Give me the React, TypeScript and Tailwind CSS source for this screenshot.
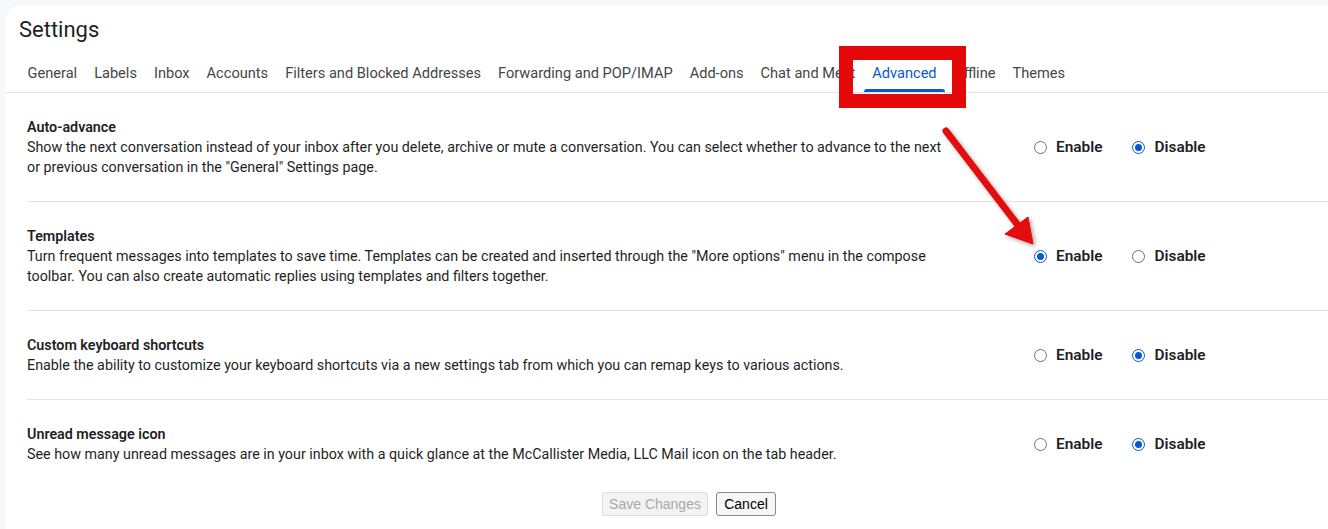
import React from 'react';

const tabs = [
  'General',
  'Labels',
  'Inbox',
  'Accounts',
  'Filters and Blocked Addresses',
  'Forwarding and POP/IMAP',
  'Add-ons',
  'Chat and Meet',
  'Advanced',
  'Offline',
  'Themes',
];

interface SettingRow {
  title: string;
  desc: string;
  enabled: boolean;
}

const rows: SettingRow[] = [
  {
    title: 'Auto-advance',
    desc: 'Show the next conversation instead of your inbox after you delete, archive or mute a conversation. You can select whether to advance to the next or previous conversation in the "General" Settings page.',
    enabled: false,
  },
  {
    title: 'Templates',
    desc: 'Turn frequent messages into templates to save time. Templates can be created and inserted through the "More options" menu in the compose toolbar. You can also create automatic replies using templates and filters together.',
    enabled: true,
  },
  {
    title: 'Custom keyboard shortcuts',
    desc: 'Enable the ability to customize your keyboard shortcuts via a new settings tab from which you can remap keys to various actions.',
    enabled: false,
  },
  {
    title: 'Unread message icon',
    desc: 'See how many unread messages are in your inbox with a quick glance at the McCallister Media, LLC Mail icon on the tab header.',
    enabled: false,
  },
];

const Radio: React.FC<{ checked: boolean; label: string }> = ({ checked, label }) => (
  <label className="flex items-center gap-[9px]">
    {checked ? (
      <span className="flex h-[13px] w-[13px] items-center justify-center rounded-full border-[1.5px] border-[#0b57d0] bg-white">
        <span className="h-[7px] w-[7px] rounded-full bg-[#0b57d0]" />
      </span>
    ) : (
      <span className="h-[13px] w-[13px] rounded-full border border-[#6f6f6f] bg-white" />
    )}
    <span className="text-[15.4px] font-semibold text-[#1f1f1f]">{label}</span>
  </label>
);

export default function App() {
  return (
    <div
      className="relative h-[529px] w-full overflow-hidden bg-[#f6f8fc] pl-[5px] pt-[5px]"
      style={{ fontFamily: 'Roboto, "Open Sans", sans-serif' }}
    >
      <div className="min-h-[560px] w-[1368px] rounded-tl-2xl bg-white">
        {/* Header */}
        <h1 className="pl-[14px] pt-[11px] text-[22px] leading-7 text-[#1f1f1f]">Settings</h1>

        {/* Tabs */}
        <div className="mt-[8px] flex border-b border-[#e3e3e3] pl-[14px]">
          {tabs.map((t) => (
            <div
              key={t}
              className={
                t === 'Advanced'
                  ? 'relative flex h-[40px] items-center px-[8.5px] pt-[4px] text-[14.6px] text-[#0b57d0]'
                  : 'flex h-[40px] items-center px-[8.5px] pt-[4px] text-[14.6px] text-[#444746]'
              }
            >
              {t}
              {t === 'Advanced' && (
                <span className="absolute bottom-0 left-0 right-0 h-[3px] rounded-t bg-[#0b57d0]" />
              )}
            </div>
          ))}
        </div>

        {/* Rows */}
        <div className="pl-[22px]">
          {rows.map((r, i) => (
            <div
              key={r.title}
              className={
                i < rows.length - 1
                  ? 'flex items-center border-b border-[#e3e3e3] py-6'
                  : 'flex items-center py-6'
              }
            >
              <div className="w-[1007px] pr-[78px] text-[14.3px] leading-5 text-[#1f1f1f]">
                <div className="font-semibold">{r.title}</div>
                <div>{r.desc}</div>
              </div>
              <div className="flex items-center gap-[30px] pt-[2px]">
                <Radio checked={r.enabled} label="Enable" />
                <Radio checked={!r.enabled} label="Disable" />
              </div>
            </div>
          ))}
        </div>

        {/* Buttons */}
        <div
          className="mt-[4px] flex gap-2 pl-[597px]"
          style={{ fontFamily: '"Liberation Sans", Arial, sans-serif' }}
        >
          <button className="h-6 w-[106px] rounded-[3px] border border-[#dcdcdc] bg-[#f3f3f3] text-[14px] text-[#a8a8a8]">
            Save Changes
          </button>
          <button className="h-6 w-[60px] rounded-[3px] border border-[#8a8a8a] bg-[#f7f7f7] text-[14px] text-black">
            Cancel
          </button>
        </div>
      </div>

      {/* Annotation: highlight box */}
      <div className="pointer-events-none absolute left-[839px] top-[46px] h-[62px] w-[127px] border-[14px] border-[#e40808]" />

      {/* Annotation: arrow */}
      <svg
        className="pointer-events-none absolute left-[935px] top-[120px]"
        width="110"
        height="135"
        viewBox="0 0 110 135"
      >
        <defs>
          <filter id="sh" x="-30%" y="-30%" width="160%" height="160%">
            <feDropShadow dx="2" dy="2" stdDeviation="2" floodColor="#000" floodOpacity="0.35" />
          </filter>
        </defs>
        <g filter="url(#sh)" fill="#e40808" stroke="#e40808">
          <line x1="11" y1="11" x2="82" y2="104" strokeWidth="7" strokeLinecap="round" />
          <polygon points="70,114 93,97 98,124" strokeWidth="1" strokeLinejoin="round" />
        </g>
      </svg>
    </div>
  );
}
